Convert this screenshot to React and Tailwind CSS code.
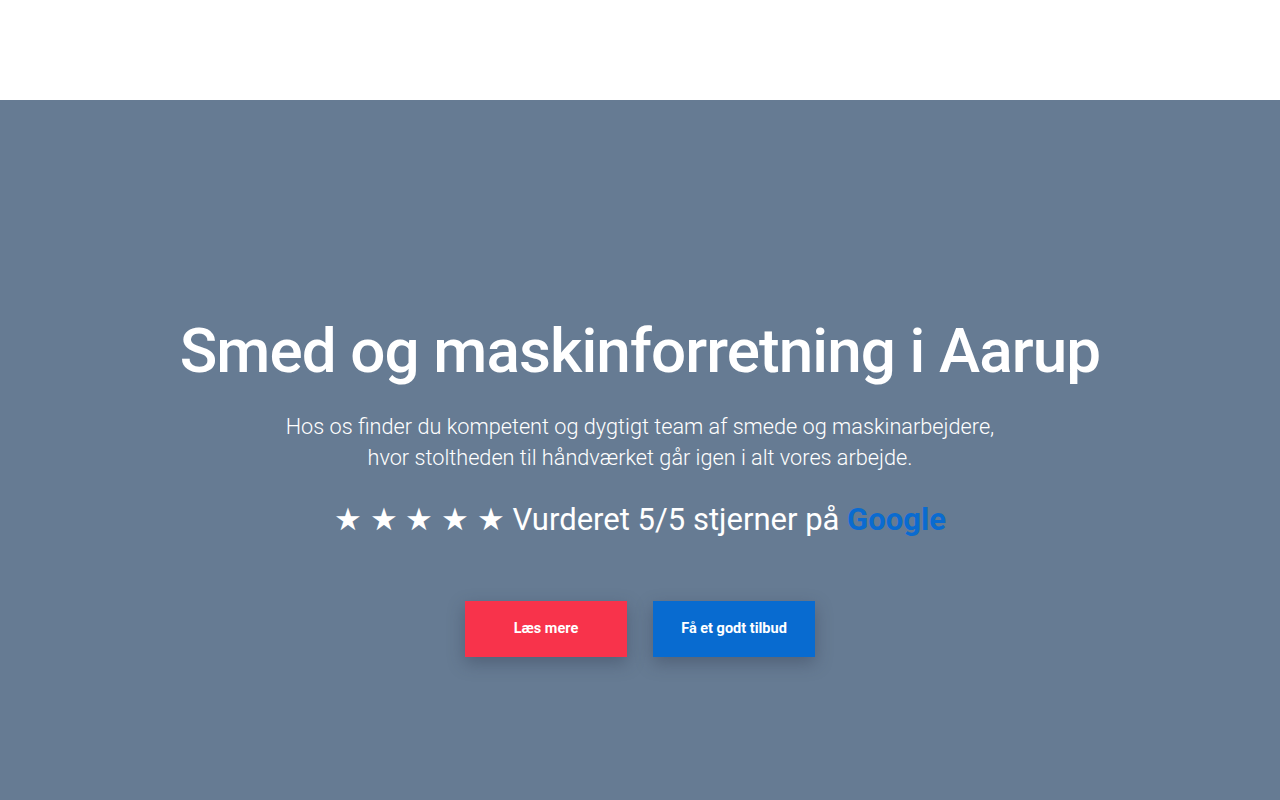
export default function App() {
  return (
    <div className="w-full min-h-[800px] flex flex-col bg-white" style={{ fontFamily: "Roboto, 'Liberation Sans', sans-serif" }}>
      <header className="h-[100px] bg-white" />
      <section className="h-[700px] bg-[#667b93] flex flex-col items-center pt-[215px] text-white">
        <h1 className="text-[62px] leading-[72px] font-medium tracking-[-0.9px]">
          Smed og maskinforretning i Aarup
        </h1>
        <p className="mt-[24px] text-[21.7px] leading-[31px] font-light text-center">
          Hos os finder du kompetent og dygtigt team af smede og maskinarbejdere,
          <br />
          hvor stoltheden til håndværket går igen i alt vores arbejde.
        </p>
        <p className="mt-[27px] text-[31px] leading-[40px] font-normal">
          ★ ★ ★ ★ ★ Vurderet 5/5 stjerner på <span className="font-bold text-[#0a6bd0]">Google</span>
        </p>
        <div className="mt-[61px] flex gap-[26px]">
          <button className="w-[162px] h-[56px] bg-[#f8334b] text-white text-[14.5px] font-bold shadow-[0_6px_16px_rgba(40,50,70,0.35)]">
            Læs mere
          </button>
          <button className="w-[162px] h-[56px] bg-[#086bd0] text-white text-[14.5px] font-bold shadow-[0_6px_16px_rgba(40,50,70,0.35)]">
            Få et godt tilbud
          </button>
        </div>
      </section>
    </div>
  );
}
